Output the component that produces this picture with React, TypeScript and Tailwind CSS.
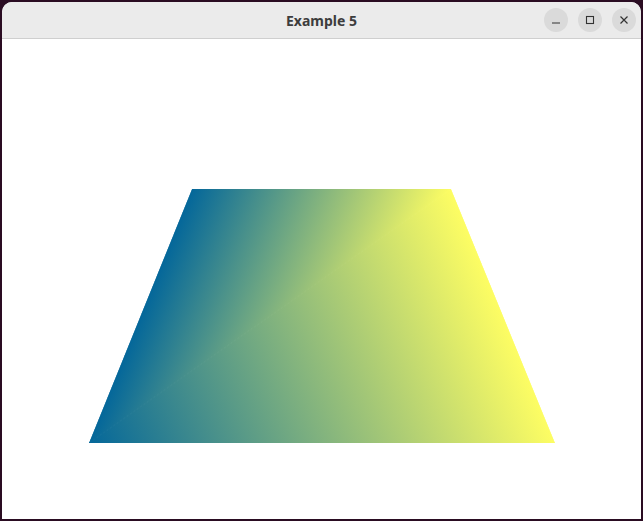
import React from "react";

function WinButton({ children }: { children: React.ReactNode }) {
  return (
    <div className="w-6 h-6 rounded-full bg-[#dadada] flex items-center justify-center text-[#333]">
      {children}
    </div>
  );
}

export default function App() {
  return (
    <div className="w-[643px] h-[521px] bg-[#2a0c22] pl-[2px] pt-[2px] overflow-hidden">
      <div className="w-[639px] h-[517px] bg-white rounded-t-[10px] overflow-hidden flex flex-col">
        {/* Title bar */}
        <div className="h-[37px] shrink-0 bg-[#ebebeb] border-b border-[#cfcfcf] relative flex items-center justify-center">
          <span
            className="text-[14px] font-bold text-[#3d3d3d]"
            style={{ fontFamily: "'Noto Sans', 'Open Sans', sans-serif" }}
          >
            Example 5
          </span>
          <div className="absolute right-[5px] top-[6px] flex gap-[10px]">
            <WinButton>
              <svg width="12" height="12" viewBox="0 0 12 12">
                <path d="M2 9h8" stroke="currentColor" strokeWidth="1.2" />
              </svg>
            </WinButton>
            <WinButton>
              <svg width="12" height="12" viewBox="0 0 12 12">
                <rect x="2.5" y="2.5" width="7" height="7" fill="none" stroke="currentColor" strokeWidth="1.1" />
              </svg>
            </WinButton>
            <WinButton>
              <svg width="12" height="12" viewBox="0 0 12 12">
                <path d="M2.5 2.5l7 7M9.5 2.5l-7 7" stroke="currentColor" strokeWidth="1.2" />
              </svg>
            </WinButton>
          </div>
        </div>

        {/* Canvas */}
        <div className="flex-1">
          <svg width="639" height="480" viewBox="2 39 639 480" className="block">
            <defs>
              <linearGradient id="g1" gradientUnits="userSpaceOnUse" x1="192" y1="189" x2="414.4" y2="279.2">
                <stop offset="0" stopColor="#04679a" />
                <stop offset="1" stopColor="#fdfd63" />
              </linearGradient>
              <linearGradient id="g2" gradientUnits="userSpaceOnUse" x1="89" y1="443" x2="488.1" y2="279.6">
                <stop offset="0" stopColor="#04679a" />
                <stop offset="1" stopColor="#fdfd63" />
              </linearGradient>
              <clipPath id="trap">
                <polygon points="192,189 451,189 555,443 89,443" />
              </clipPath>
            </defs>
            <g clipPath="url(#trap)">
              <polygon points="89,443 555,443 451,189" fill="url(#g2)" stroke="url(#g2)" strokeWidth="1" />
              <polygon points="192,189 89,443 451,189" fill="url(#g1)" stroke="url(#g1)" strokeWidth="1" />
            </g>
          </svg>
        </div>
      </div>
    </div>
  );
}
